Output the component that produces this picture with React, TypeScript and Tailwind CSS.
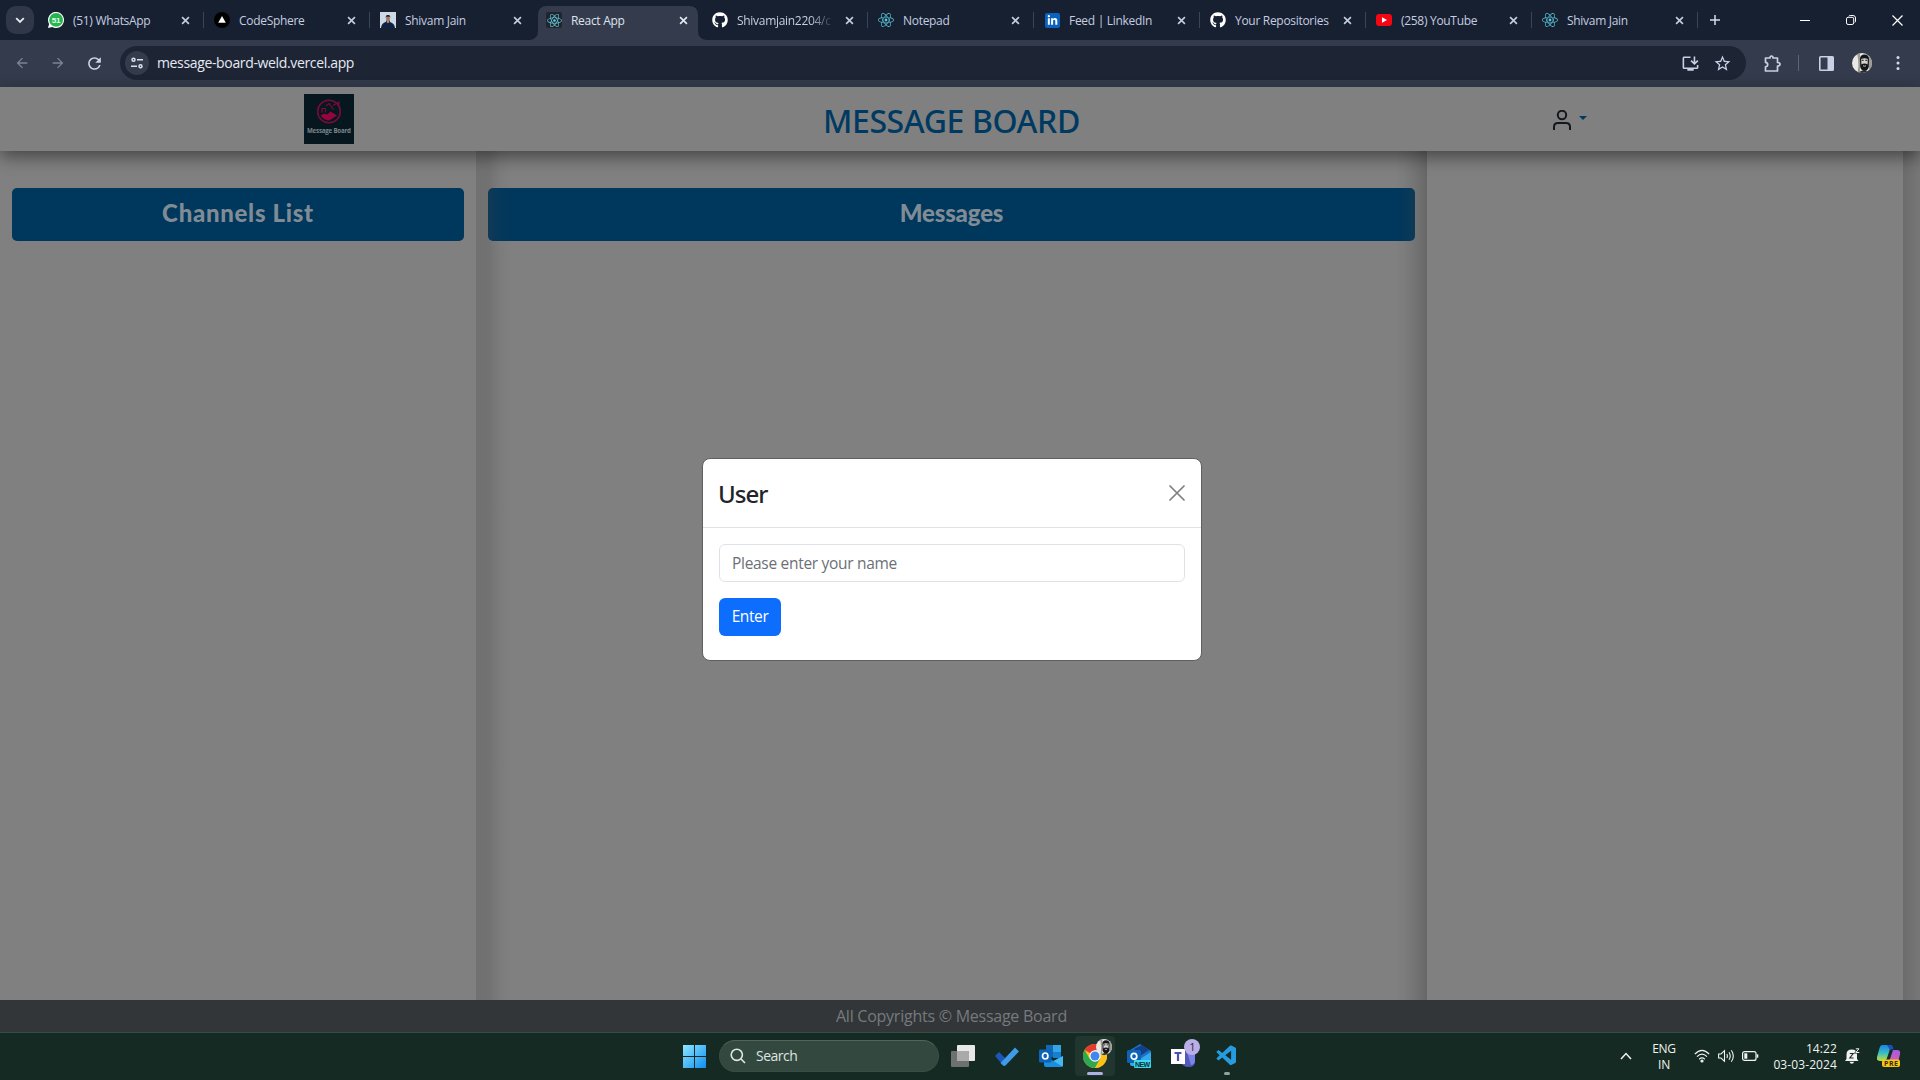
import React from "react";
import { FaGithub, FaReact, FaLinkedinIn } from "react-icons/fa";
import { MdArrowBack, MdArrowForward, MdOutlineInstallDesktop, MdRefresh, MdStarBorder } from "react-icons/md";
import { VscVscode } from "react-icons/vsc";

const CloseIcon = ({ className }: { className: string }) => (
  <svg viewBox="0 0 10 10" className={className} fill="none" stroke="currentColor" strokeWidth="1.8">
    <path d="M1.2 1.2 8.8 8.8M8.8 1.2 1.2 8.8" />
  </svg>
);

const WhatsAppIcon = () => (
  <svg viewBox="0 0 16 16" className="size-4">
    <path d="M0 16 1.1 12A8 8 0 1 1 4.2 15Z" fill="#fff" />
    <circle cx="8.1" cy="7.9" r="6.9" fill="#27b552" />
    <text x="8.1" y="10.9" textAnchor="middle" fontSize="8" fontWeight="700" fontFamily="Liberation Sans, sans-serif" fill="#e8ffe8">
      51
    </text>
  </svg>
);

const VercelIcon = () => (
  <svg viewBox="0 0 16 16" className="size-4">
    <circle cx="8" cy="8" r="8" fill="#000" />
    <path d="M8 4 11.8 10.8H4.2Z" fill="#fff" />
  </svg>
);

const PortraitIcon = () => (
  <svg viewBox="0 0 16 16" className="size-4">
    <rect width="16" height="16" fill="#cdd9e3" />
    <path d="M1 16c.3-3.4 2-5 5-6.2V8.5h4V10c3.3 1 4.6 2.8 5 6Z" fill="#0e2244" />
    <path d="M6.5 8h3l-.4 2.5-1.1.8-1.2-.8Z" fill="#b98b78" />
    <ellipse cx="8" cy="6.6" rx="2" ry="2.5" fill="#a37868" />
    <path d="M5.7 6c-.2-2.5 1-3 2.3-3s2.5.5 2.3 3l-.6-1.2H6.3Z" fill="#20222a" />
  </svg>
);

const ReactIcon = () => (
  <span className="flex size-4 items-center justify-center rounded-[2px] bg-[#20242c]">
    <FaReact className="size-[15px] text-[#61c9dc]" />
  </span>
);

const BareReactIcon = () => <FaReact className="size-4 text-[#58c4d6]" />;

const GithubIcon = () => <FaGithub className="size-4 text-white" />;

const LinkedInIcon = () => (
  <span className="flex size-[15px] items-center justify-center rounded-[2px] bg-[#0a62c0]">
    <FaLinkedinIn className="size-[11px] text-white" />
  </span>
);

const YouTubeIcon = () => (
  <svg viewBox="0 0 16 16" className="size-4">
    <rect y="2" width="16" height="12" rx="3" fill="#f40612" />
    <path d="M6 5.3 11 8l-5 2.7Z" fill="#fff" />
  </svg>
);

type TabData = { title: string; icon: React.ReactNode; active?: boolean; sep?: boolean; fade?: boolean };

const tabs: TabData[] = [
  { title: "(51) WhatsApp", icon: <WhatsAppIcon />, sep: true },
  { title: "CodeSphere", icon: <VercelIcon />, sep: true },
  { title: "Shivam Jain", icon: <PortraitIcon /> },
  { title: "React App", icon: <ReactIcon />, active: true },
  { title: "Shivamjain2204/c", icon: <GithubIcon />, sep: true, fade: true },
  { title: "Notepad", icon: <BareReactIcon />, sep: true },
  { title: "Feed | LinkedIn", icon: <LinkedInIcon />, sep: true },
  { title: "Your Repositories", icon: <GithubIcon />, sep: true },
  { title: "(258) YouTube", icon: <YouTubeIcon />, sep: true },
  { title: "Shivam Jain", icon: <BareReactIcon />, sep: true },
];

function Tab({ tab }: { tab: TabData }) {
  return (
    <div className="relative flex h-10 w-[166px] shrink-0 items-start">
      {tab.active && (
        <svg viewBox="0 0 178 34" className="absolute -left-[6px] top-[6px] h-[34px] w-[178px]">
          <path d="M0 34Q8 33 8 25V9Q8 0 17 0H159Q168 0 168 9V25Q168 33 176 34Z" fill="#333b4c" />
        </svg>
      )}
      <div className="relative flex h-10 w-full items-center pl-[10px]">
        <span className="flex size-4 shrink-0 items-center justify-center">{tab.icon}</span>
        <span
          className={`ml-[9px] w-[97px] whitespace-nowrap pt-[2px] text-[12px] leading-4 tracking-[-0.3px] ${
            tab.active ? "text-[#dfe3ee]" : "text-[#c5cde0]"
          } ${tab.fade ? "[mask-image:linear-gradient(to_right,black_75%,transparent_100%)]" : ""}`}
        >
          {tab.title}
        </span>
        <CloseIcon className={`ml-[10.5px] size-[9px] ${tab.active ? "text-[#e6e9f2]" : "text-[#c5cde0]"}`} />
        {tab.sep && <span className="ml-auto h-4 w-[1.5px] bg-[#3a455a]" />}
      </div>
    </div>
  );
}

function TabStrip() {
  return (
    <div className="flex h-10 items-center bg-[#172031] pl-[6px]">
      <div className="flex size-7 items-center justify-center rounded-[10px] bg-[#2f3748] text-[#e3e7f1]">
        <svg viewBox="0 0 10 10" className="size-[10px]" fill="none" stroke="currentColor" strokeWidth="1.9">
          <path d="M1.2 3.2 5 7l3.8-3.8" />
        </svg>
      </div>
      <div className="ml-1 flex">
        {tabs.map((t, i) => (
          <Tab key={i} tab={t} />
        ))}
      </div>
      <svg viewBox="0 0 10 10" className="ml-[12px] size-[10px]" stroke="#d5daea" strokeWidth="1.5">
        <path d="M5 0v10M0 5h10" />
      </svg>
      <div className="ml-auto flex items-center pr-[17px] text-white">
        <span className="h-px w-[10px] bg-white" />
        <svg viewBox="0 0 10 10" className="ml-9 size-[10px]" fill="none" stroke="currentColor" strokeWidth="1">
          <rect x=".5" y="2.3" width="7.2" height="7.2" rx="1.6" />
          <path d="M2.7 1.2Q3 .5 4.2.5H7Q9.5.5 9.5 3v3Q9.5 7 8.8 7.5" />
        </svg>
        <svg viewBox="0 0 11 11" className="ml-9 size-[11px]" stroke="currentColor" strokeWidth="1.2">
          <path d="M.5.5l10 10M10.5.5l-10 10" />
        </svg>
      </div>
    </div>
  );
}

const Avatar = ({ className }: { className: string }) => (
  <svg viewBox="0 0 20 20" className={className}>
    <defs>
      <clipPath id="round">
        <circle cx="10" cy="10" r="10" />
      </clipPath>
    </defs>
    <g clipPath="url(#round)">
      <rect width="20" height="20" fill="#e9e8e4" />
      <path d="M5 0h3v20H5.5q2-9-.5-20ZM17 0h3v20h-3Z" fill="#9b9a94" />
      <path d="M8 6Q8 1.5 12.5 1.5T17 6L16.8 14Q15.5 18 12.5 18T8.2 14Z" fill="#15161a" />
      <path d="M7 20q1-3 5.5-2.5T18 20Z" fill="#2a2b2e" />
      <path d="M9.2 6Q12.5 4.5 15.8 6L15.6 11.5Q14.5 10.5 12.5 10.5T9.4 11.5Z" fill="#d5d3cd" />
      <path d="M9.7 7.3h2M13.3 7.3h2" stroke="#15161a" strokeWidth="1.1" />
      <path d="M11 12.8q1.5.8 3 0" stroke="#c2c0ba" strokeWidth="1" fill="none" />
    </g>
  </svg>
);

function Toolbar() {
  return (
    <div className="flex h-[47px] items-center bg-[#333b4c] pb-[1px] pl-[14px]">
      <MdArrowBack className="size-4 text-[#7b8498]" />
      <MdArrowForward className="ml-5 size-4 text-[#7b8498]" />
      <MdRefresh className="ml-[19px] size-[19px] text-[#ced5e6]" />
      <div className="ml-[16px] flex h-[34px] w-[1626px] items-center rounded-full bg-[#1d2535] pl-[5px] pr-[14px]">
        <div className="flex size-6 items-center justify-center rounded-full bg-[#333b4c]">
          <svg viewBox="0 0 12 12" className="size-3" fill="none" stroke="#dbe0ee" strokeWidth="1.5">
            <circle cx="2.5" cy="2.8" r="1.5" />
            <path d="M6 2.8h6M0 9.2h6" />
            <circle cx="9.5" cy="9.2" r="1.5" />
          </svg>
        </div>
        <span className="ml-2 text-[14px] leading-5 tracking-[-0.35px] text-[#e6e9f2]">message-board-weld.vercel.app</span>
        <MdOutlineInstallDesktop className="ml-auto size-[19px] text-[#c8d0e6]" />
        <MdStarBorder className="ml-[13px] size-[19px] text-[#c8d0e6]" />
      </div>
      <svg viewBox="0 0 17 17" className="ml-[18px] size-[17px]" fill="none" stroke="#c8d0e6" strokeWidth="1.7" strokeLinejoin="round">
        <path d="M1.5 3H6Q6 1 7.5 1T9 3h4.5V7.5Q16 7.5 16 9.2T13.5 11V16h-12V11.8Q3.7 11.5 3.7 9.5T1.5 7.3Z" />
      </svg>
      <span className="ml-[17px] h-4 w-px bg-[#5a647a]" />
      <svg viewBox="0 0 15 15" className="ml-[20px] size-[15px]" fill="#c8d0e6">
        <path d="M1.5 0h12Q15 0 15 1.5v12Q15 15 13.5 15h-12Q0 15 0 13.5v-12Q0 0 1.5 0ZM1.6 1.6v11.8H8.5V1.6Z" fillRule="evenodd" />
      </svg>
      <Avatar className="ml-[18px] size-5" />
      <svg viewBox="0 0 4 16" className="ml-[24px] h-4 w-1" fill="#d5dbea">
        <circle cx="2" cy="2.5" r="1.5" />
        <circle cx="2" cy="8" r="1.5" />
        <circle cx="2" cy="13.5" r="1.5" />
      </svg>
    </div>
  );
}

function BoardLogo() {
  return (
    <svg viewBox="0 0 50 50" className="size-[50px]">
      <rect width="50" height="50" fill="#061720" />
      <circle cx="25" cy="17.5" r="11.3" fill="none" stroke="#780c38" strokeWidth="1.6" />
      <path d="M16.5 21.5 20 19.5 23 20.5 26.5 17.5 33 21.5 25.5 26.5Q20 26.5 16.500 21.500Z" fill="#93053c" />
      <path d="M18 18.500V14.500h3.500v4M22 12l3-2.500 4.500 6M29 11.500l6-3.500-.5 5" fill="none" stroke="#780c38" strokeWidth="1.200" />
      <text x="25" y="38.8" textAnchor="middle" fontSize="6.2" fontWeight="700" fontFamily="Open Sans, sans-serif" fill="#7b868b" textLength="44">
        Message Board
      </text>
    </svg>
  );
}

function Header() {
  return (
    <header className="relative z-10 flex h-16 w-full items-start bg-[#808080] shadow-[0_6px_16px_rgba(0,0,0,0.45)]">
      <div className="ml-[304px] mt-[7px]">
        <BoardLogo />
      </div>
      <h1 className="ml-[469px] mt-[14px] w-[260px] whitespace-nowrap font-['Noto_Sans'] text-[32px] font-medium leading-10 tracking-[-0.4px] text-[#003a61]">
        MESSAGE BOARD
      </h1>
      <svg viewBox="0 0 18 20" className="ml-[470px] mt-[23px] h-5 w-[18px]" fill="none" stroke="#15181a" strokeWidth="2">
        <circle cx="9" cy="5" r="4.2" />
        <path d="M1 20V17Q1 13 5 13h8q4 0 4 4v3" />
      </svg>
      <svg viewBox="0 0 8 4" className="ml-2 mt-[29px] h-1 w-2">
        <path d="M0 0h8L4 4Z" fill="#003a61" />
      </svg>
    </header>
  );
}

const ColumnTitle = ({ children, className }: { children: string; className: string }) => (
  <h2
    className={`flex h-[53px] items-center justify-center rounded-[5px] bg-[#00375c] pb-[3px] font-['Lato'] text-[24px] font-black leading-8 text-[#808c95] ${className}`}
  >
    {children}
  </h2>
);

function Board() {
  return (
    <main className="flex h-[849px] bg-[#808080]">
      <section className="w-[476px] px-[12px] pt-[37px]">
        <ColumnTitle className="tracking-[0.7px]">Channels List</ColumnTitle>
      </section>
      <section className="relative w-[951px] px-[12px] pt-[37px]">
        <ColumnTitle className="tracking-[-0.15px]">Messages</ColumnTitle>
        <div className="absolute inset-y-0 left-0 w-[36px] bg-[linear-gradient(to_right,rgba(68,68,68,0.26),rgba(68,68,68,0.24)_35%,rgba(68,68,68,0.08)_65%,rgba(68,68,68,0))]" />
        <div className="absolute inset-y-0 right-0 w-[32px] bg-[linear-gradient(to_left,rgba(68,68,68,0.42),rgba(68,68,68,0.22)_35%,rgba(68,68,68,0.07)_70%,rgba(68,68,68,0))]" />
      </section>
      <section className="w-[476px]" />
      <div className="flex-1 bg-[linear-gradient(to_right,#6c6c6c,#777777)]" />
    </main>
  );
}

function UserModal() {
  return (
    <div className="absolute left-[702px] top-[458px] h-[203px] w-[500px] rounded-[8px] border border-[#5f5f5f] bg-white">
      <div className="flex h-[69px] items-center justify-between border-b border-[#dee2e6] pl-[15px] pr-[16px]">
        <h4 className="pt-[2px] font-['Noto_Sans'] text-[24px] font-medium leading-9 tracking-[-1px] text-[#212529]">User</h4>
        <svg viewBox="0 0 16 16" className="size-4" stroke="#7f7f7f" strokeWidth="1.7" strokeLinecap="round">
          <path d="M1 1l14 14M15 1 1 15" />
        </svg>
      </div>
      <div className="p-4">
        <input
          className="block h-[38px] w-full rounded-[6px] border border-[#dee2e6] px-3 text-[15.500px] tracking-[-0.3px] placeholder-[#6b7076]"
          placeholder="Please enter your name"
        />
        <button className="mt-4 h-[38px] w-[62px] rounded-[6px] bg-[#0d6efd] text-[15.500px] font-medium tracking-[-0.4px] text-white">
          Enter
        </button>
      </div>
    </div>
  );
}

const WindowsIcon = () => (
  <svg viewBox="0 0 23 23" className="size-[23px]">
    <defs>
      <linearGradient id="win" x1="0" y1="0" x2="1" y2="1">
        <stop offset="0" stopColor="#8ee6ff" />
        <stop offset="1" stopColor="#0f8fee" />
      </linearGradient>
    </defs>
    <path d="M0 0H11V11H0ZM12 0H23V11H12ZM0 12H11V23H0ZM12 12H23V23H12Z" fill="url(#win)" />
  </svg>
);

const TaskViewIcon = () => (
  <svg viewBox="0 0 24 22" className="h-[22px] w-6">
    <rect x="6" width="18" height="16" rx="1" fill="#e8e8e8" />
    <rect y="6" width="18" height="16" rx="1" fill="#6e726f" />
    <path d="M6 6h12v10H6Z" fill="#a9aaa9" />
  </svg>
);

const TodoIcon = () => (
  <svg viewBox="0 0 24 20" className="h-5 w-6">
    <path d="M0 10 4 6l7 7-4.5 4.5Z" fill="#1c57b5" />
    <path d="M5.5 17 20 1.5 24 5.5 10.5 19.5Q9 20.5 7.5 19Z" fill="#3d9bea" />
  </svg>
);

const OutlookIcon = () => (
  <svg viewBox="0 0 24 22" className="h-[22px] w-6">
    <path d="M7 0h14v12H7Z" fill="#1368b4" />
    <path d="M14 0h8v7h-8Z" fill="#35a3e8" />
    <path d="M14 7h8v6h-8Z" fill="#1580cf" />
    <path d="M5 11 14.5 16 24 11v9q0 2-2 2H7q-2 0-2-2Z" fill="#1a8fe0" />
    <path d="M14.5 16 24 11v9q0 1-.7 1.5Z" fill="#48b7f2" />
    <rect y="4.5" width="12.5" height="13" rx="1" fill="#0c64b8" />
    <ellipse cx="6.2" cy="11" rx="2.7" ry="3" fill="none" stroke="#fff" strokeWidth="1.7" />
  </svg>
);

const ChromeIcon = () => (
  <svg viewBox="0 0 24 24" className="size-6">
    <circle cx="12" cy="12" r="12" fill="#fbc116" />
    <path d="M12 12 1.6 6A12 12 0 0 1 22.4 6H12Z" fill="#e33b2e" />
    <path d="M1.6 6A12 12 0 0 0 12 24L17.2 15 12 12 6.8 15Z" fill="#2da94f" />
    <path d="M12 6.5H22.7A12 12 0 0 1 12 24L17 15Z" fill="#fbc116" />
    <circle cx="12" cy="12" r="5.7" fill="#fff" />
    <circle cx="12" cy="12" r="4.5" fill="#4285f4" />
  </svg>
);

const NewOutlookIcon = () => (
  <svg viewBox="0 0 24 24" className="size-6">
    <path d="M3 6 13 0 24 7v10H3Z" fill="#1c6fc4" />
    <path d="M7 5 15 1 22 6 13 12Z" fill="#123f88" />
    <path d="M3 20V11l10 4L24 8v10q0 3-3 4H5Q3 22 3 20Z" fill="#34a9ec" />
    <rect y="6" width="14" height="13" rx="1.5" fill="#0c64b8" />
    <ellipse cx="7" cy="12.3" rx="2.8" ry="3" fill="none" stroke="#fff" strokeWidth="1.7" />
    <rect x="7" y="16" width="17" height="8" rx="1" fill="#3fd8e8" />
    <text x="15.5" y="22.7" textAnchor="middle" fontSize="7" fontWeight="700" fontFamily="Liberation Sans, sans-serif" fill="#08303c" textLength="15">
      NEW
    </text>
  </svg>
);

const TeamsIcon = () => (
  <svg viewBox="0 0 30 30" className="h-[30px] w-[30px]">
    <path d="M9 13h15v9q0 6-6 6-7 0-9-6Z" fill="#5159b9" />
    <path d="M16 13h8v9q0 3-4 4Z" fill="#7b83eb" />
    <rect y="10" width="14" height="15" fill="#fff" />
    <path d="M3.5 14h7M7 14v8" stroke="#4a52b0" strokeWidth="2.2" />
    <circle cx="21" cy="8" r="8" fill="#b9aee6" />
    <text x="21.3" y="12" textAnchor="middle" fontSize="11" fontFamily="Open Sans, sans-serif" fill="#2a2740">
      1
    </text>
  </svg>
);

function SystemTray() {
  return (
    <div className="flex items-center text-[#f0f3f1]">
      <svg viewBox="0 0 12 8" className="h-2 w-[12px]" fill="none" stroke="currentColor" strokeWidth="1.5">
        <path d="M1 7 6 1.5 11 7" />
      </svg>
      <div className="ml-[19px] w-[26px] pt-[1px] text-center text-[12px] leading-4 tracking-[-0.3px]">
        ENG
        <br />
        IN
      </div>
      <svg viewBox="0 0 16 14" className="ml-[17px] h-[14px] w-4" fill="none" stroke="currentColor" strokeWidth="1.2">
        <path d="M.8 5.2Q8-2.5 15.2 5.2M3 7.7q5-5 10 0M5.2 10.2q2.8-2.6 5.6 0" />
        <circle cx="8" cy="12" r="1" fill="currentColor" />
      </svg>
      <svg viewBox="0 0 17 14" className="ml-2 h-[14px] w-[17px]" fill="none" stroke="currentColor" strokeWidth="1.1">
        <path d="M.6 5H3l3.5-3.3v10.6L3 9H.6ZM8.8 5q1.2 2 0 4M11 3.2q2.5 3.8 0 7.6M13.3 1.2q4 5.8 0 11.6" />
      </svg>
      <svg viewBox="0 0 17 10" className="ml-[7px] h-[10px] w-[17px]" fill="none" stroke="currentColor" strokeWidth="1.2">
        <rect x=".6" y=".6" width="13.4" height="8.8" rx="2" />
        <path d="M15.5 3.3v3.4" strokeWidth="1.6" />
        <rect x="2.3" y="2.3" width="3" height="5.4" fill="currentColor" stroke="none" />
      </svg>
      <div className="ml-[13px] w-[65px] whitespace-nowrap pt-[1px] text-right text-[12px] leading-4 tracking-[0.1px]">
        14:22
        <br />
        03-03-2024
      </div>
      <svg viewBox="0 0 15 16" className="ml-2 h-4 w-[15px]">
        <path d="M1.500 11V6.500Q1.500 1.500 6.800 1.500 12 1.500 12 6.500V11L13.500 13H0ZM4.500 13.800h4.600q-.5 2-2.300 2T4.500 13.800Z" fill="#f0f3f1" />
        <path d="M4.800 5.500H8.200L4.800 10H8.600" stroke="#142a22" strokeWidth="1.1" fill="none" />
        <path d="M10.800.8H14L10.800 4.500H14.300" stroke="#142a22" strokeWidth="1.900" fill="none" />
        <path d="M10.800.8H14L10.800 4.500H14.300" stroke="#f0f3f1" strokeWidth="1" fill="none" />
      </svg>
      <svg viewBox="0 0 24 24" className="ml-[17px] size-6">
        <defs>
          <linearGradient id="cpa" x1="0" y1="0" x2="0" y2="1">
            <stop offset="0" stopColor="#1f7fe8" />
            <stop offset=".5" stopColor="#36c0c0" />
            <stop offset="1" stopColor="#c8dc3a" />
          </linearGradient>
          <linearGradient id="cpb" x1="0" y1="0" x2="0" y2="1">
            <stop offset="0" stopColor="#a05be8" />
            <stop offset="1" stopColor="#f2608a" />
          </linearGradient>
        </defs>
        <path d="M5 1h8q3 0 2 3l-2 1-3 9q-1 3-4 3H3q-4 0-3-4L2.5 4Q3.3 1 5 1Z" fill="url(#cpa)" />
        <path d="M10 1h3q3 0 3.5 4L13 6Z" fill="#1b4fb8" />
        <path d="M16 6h4q4 0 3 4l-2 9q-1 3-4 3H9l3-4Z" fill="url(#cpb)" />
        <rect x="5" y="15.5" width="18" height="7.5" rx="2" fill="#fbc61a" />
        <text x="14" y="21.8" textAnchor="middle" fontSize="7" fontWeight="700" fontFamily="Open Sans, sans-serif" fill="#3a2c00" textLength="14">
          PRE
        </text>
      </svg>
    </div>
  );
}

function Taskbar() {
  return (
    <div className="flex h-12 items-center border-t border-[#384c43] bg-[#142a22] pb-[1px] pl-[683px] pr-[19px]">
      <WindowsIcon />
      <div className="ml-[13px] flex h-8 w-[220px] items-center rounded-full border border-t-[#53645b] border-x-[#3a4d44] border-b-[#3a4d44] bg-[#33483f] pl-[10px]">
        <svg viewBox="0 0 16 16" className="size-4" fill="none" stroke="#e2e8e5" strokeWidth="1.6">
          <circle cx="6.8" cy="6.8" r="5.6" />
          <path d="M10.8 10.8 15 15" />
        </svg>
        <span className="ml-[10px] text-[14px] leading-5 tracking-[-0.5px] text-[#dde5e1]">Search</span>
      </div>
      <div className="ml-[12px]">
        <TaskViewIcon />
      </div>
      <div className="ml-[20px]">
        <TodoIcon />
      </div>
      <div className="ml-[20px]">
        <OutlookIcon />
      </div>
      <div className="relative ml-[12px] flex size-10 items-center justify-center rounded-[4px] bg-[#21362e]">
        <ChromeIcon />
        <Avatar className="absolute left-[21px] top-[3px] size-4" />
        <span className="absolute bottom-[1px] left-[12px] h-[3px] w-4 rounded-full bg-[#aeb1df]" />
      </div>
      <div className="ml-[12px]">
        <NewOutlookIcon />
      </div>
      <div className="-mt-[5px] ml-[20px]">
        <TeamsIcon />
      </div>
      <div className="relative ml-[14px]">
        <VscVscode className="size-6 text-[#259be0]" />
        <span className="absolute -bottom-[7px] left-[9px] h-[3px] w-[6px] rounded-full bg-[#93a39b]" />
      </div>
      <div className="ml-auto">
        <SystemTray />
      </div>
    </div>
  );
}

export default function App() {
  return (
    <div className="relative flex h-[1080px] w-[1920px] flex-col overflow-hidden bg-[#808080] font-['Open_Sans',sans-serif]">
      <TabStrip />
      <Toolbar />
      <Header />
      <Board />
      <footer className="flex h-8 items-center bg-[#323639] pl-[836px] text-[16px] tracking-[-0.25px] text-[#777a7d]">
        All Copyrights © Message Board
      </footer>
      <Taskbar />
      <UserModal />
    </div>
  );
}
